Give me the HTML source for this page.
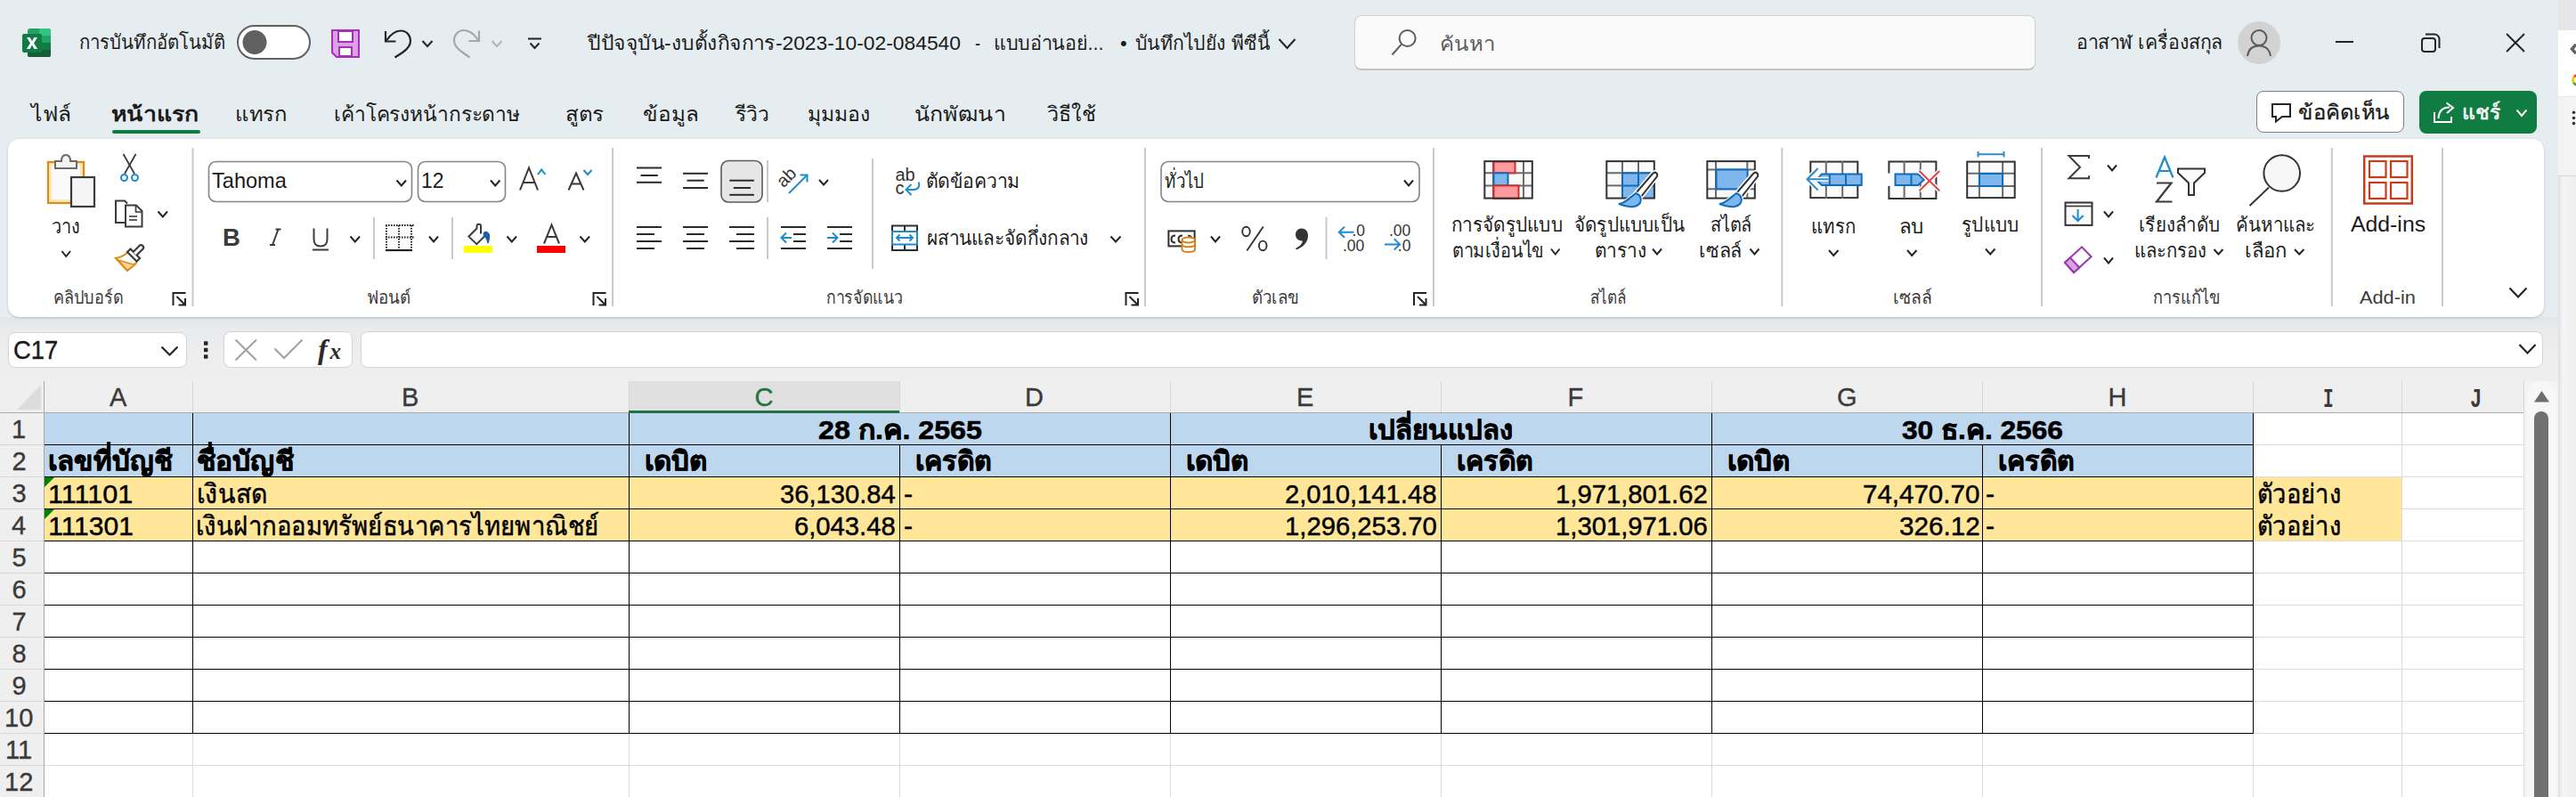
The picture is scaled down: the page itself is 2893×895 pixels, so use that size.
<!DOCTYPE html>
<html><head><meta charset="utf-8"><title>Excel</title><style>
html,body{margin:0;padding:0}
body{width:2893px;height:895px;overflow:hidden;position:relative;background:#e6edf0;font-family:"Liberation Sans",sans-serif}
.t{position:absolute;white-space:pre;transform-origin:0 0}
.ov{position:absolute;left:0;top:0}
.b{position:absolute;box-sizing:border-box}
</style></head><body>
<div class="b" style="left:0;top:356px;width:2873px;height:72px;background:linear-gradient(#e2e6e8,#e9ebec 14px,#eeeeee 50px)"></div>
<div class="b" style="left:9px;top:156px;width:2848px;height:200px;background:#fff;border-radius:13px;box-shadow:0 1px 3px rgba(0,0,0,0.18)"></div>
<div class="b" style="left:9px;top:373px;width:201px;height:40px;background:#fff;border:1px solid #d4d4d4;border-radius:8px"></div>
<div class="b" style="left:251px;top:372px;width:145px;height:41px;background:#fff;border:1px solid #d4d4d4;border-radius:8px"></div>
<div class="b" style="left:405px;top:372px;width:2451px;height:41px;background:#fff;border:1px solid #d4d4d4;border-radius:8px"></div>
<div class="b" style="left:1521px;top:17px;width:765px;height:62px;background:#fafafa;border:1px solid #d0d0d0;border-bottom:2px solid #c4c4c4;border-radius:8px"></div>
<div class="b" style="left:2513px;top:24px;width:48px;height:48px;background:#d2d2d2;border-radius:50%"></div>
<div class="b" style="left:2534px;top:102px;width:166px;height:47px;background:#fff;border:1.6px solid #7f7f7f;border-radius:8px"></div>
<div class="b" style="left:2717px;top:102px;width:132px;height:48px;background:#107c41;border-radius:8px"></div>
<div class="b" style="left:2834px;top:428px;width:39px;height:467px;background:#f3f3f3"></div>
<div class="b" style="left:2838px;top:428px;width:33px;height:480px;background:#f7f7f7;border-radius:16px"></div>
<div class="b" style="left:2846px;top:462px;width:16px;height:460px;background:#707070;border-radius:8px"></div>
<div class="b" style="left:2873px;top:0;width:20px;height:895px;background:linear-gradient(to right,#dedede,#f4f4f4 5px,#eeeeee)"></div>
<div class="b" style="left:2873px;top:0;width:20px;height:34px;background:#e6e6e8"></div>
<div class="b" style="left:2873px;top:34px;width:20px;height:74px;background:#ffffff"></div>
<div class="b" style="left:2873px;top:108px;width:20px;height:90px;background:#f3f3f3;border-top:1px solid #e6e6e6;border-bottom:1px solid #d6d6d6"></div>
<svg class="ov" width="2893" height="895" viewBox="0 0 2893 895" shape-rendering="crispEdges">
<rect x="0" y="428" width="2834" height="35" fill="#efefef"/>
<rect x="706" y="428" width="304" height="35" fill="#e0e0e0"/>
<rect x="0" y="463" width="49" height="432" fill="#efefef"/>
<rect x="49" y="463" width="2785" height="432" fill="#ffffff"/>
<rect x="216" y="463" width="1" height="432" fill="#dcdcdc"/>
<rect x="706" y="463" width="1" height="432" fill="#dcdcdc"/>
<rect x="1010" y="463" width="1" height="432" fill="#dcdcdc"/>
<rect x="1314" y="463" width="1" height="432" fill="#dcdcdc"/>
<rect x="1618" y="463" width="1" height="432" fill="#dcdcdc"/>
<rect x="1922" y="463" width="1" height="432" fill="#dcdcdc"/>
<rect x="2226" y="463" width="1" height="432" fill="#dcdcdc"/>
<rect x="2530" y="463" width="1" height="432" fill="#dcdcdc"/>
<rect x="2697" y="463" width="1" height="432" fill="#dcdcdc"/>
<rect x="2834" y="463" width="1" height="432" fill="#dcdcdc"/>
<rect x="49" y="499" width="2785" height="1" fill="#dcdcdc"/>
<rect x="49" y="535" width="2785" height="1" fill="#dcdcdc"/>
<rect x="49" y="571" width="2785" height="1" fill="#dcdcdc"/>
<rect x="49" y="607" width="2785" height="1" fill="#dcdcdc"/>
<rect x="49" y="643" width="2785" height="1" fill="#dcdcdc"/>
<rect x="49" y="679" width="2785" height="1" fill="#dcdcdc"/>
<rect x="49" y="715" width="2785" height="1" fill="#dcdcdc"/>
<rect x="49" y="751" width="2785" height="1" fill="#dcdcdc"/>
<rect x="49" y="787" width="2785" height="1" fill="#dcdcdc"/>
<rect x="49" y="823" width="2785" height="1" fill="#dcdcdc"/>
<rect x="49" y="859" width="2785" height="1" fill="#dcdcdc"/>
<rect x="49" y="895" width="2785" height="1" fill="#dcdcdc"/>
<rect x="50" y="463" width="2480" height="72" fill="#bdd7ee"/>
<rect x="50" y="536" width="2647" height="71" fill="#ffe699"/>
<rect x="49" y="499" width="2482" height="1" fill="#000"/>
<rect x="49" y="535" width="2482" height="1" fill="#000"/>
<rect x="49" y="571" width="2482" height="1" fill="#000"/>
<rect x="49" y="607" width="2482" height="1" fill="#000"/>
<rect x="49" y="643" width="2482" height="1" fill="#000"/>
<rect x="49" y="679" width="2482" height="1" fill="#000"/>
<rect x="49" y="715" width="2482" height="1" fill="#000"/>
<rect x="49" y="751" width="2482" height="1" fill="#000"/>
<rect x="49" y="787" width="2482" height="1" fill="#000"/>
<rect x="49" y="823" width="2482" height="1" fill="#000"/>
<rect x="216" y="463" width="1" height="361" fill="#000"/>
<rect x="706" y="463" width="1" height="361" fill="#000"/>
<rect x="1010" y="499" width="1" height="325" fill="#000"/>
<rect x="1314" y="463" width="1" height="361" fill="#000"/>
<rect x="1618" y="499" width="1" height="325" fill="#000"/>
<rect x="1922" y="463" width="1" height="361" fill="#000"/>
<rect x="2226" y="499" width="1" height="325" fill="#000"/>
<rect x="2530" y="463" width="1" height="361" fill="#000"/>
<rect x="216" y="428" width="1" height="35" fill="#d6d6d6"/>
<rect x="706" y="428" width="1" height="35" fill="#d6d6d6"/>
<rect x="1010" y="428" width="1" height="35" fill="#d6d6d6"/>
<rect x="1314" y="428" width="1" height="35" fill="#d6d6d6"/>
<rect x="1618" y="428" width="1" height="35" fill="#d6d6d6"/>
<rect x="1922" y="428" width="1" height="35" fill="#d6d6d6"/>
<rect x="2226" y="428" width="1" height="35" fill="#d6d6d6"/>
<rect x="2530" y="428" width="1" height="35" fill="#d6d6d6"/>
<rect x="2697" y="428" width="1" height="35" fill="#d6d6d6"/>
<rect x="2834" y="428" width="1" height="35" fill="#d6d6d6"/>
<rect x="0" y="463" width="2834" height="1" fill="#ababab"/>
<rect x="706" y="461" width="304" height="3" fill="#217346"/>
<rect x="49" y="428" width="1" height="467" fill="#a8a8a8"/>
<rect x="0" y="499" width="49" height="1" fill="#d9d9d9"/>
<rect x="0" y="535" width="49" height="1" fill="#d9d9d9"/>
<rect x="0" y="571" width="49" height="1" fill="#d9d9d9"/>
<rect x="0" y="607" width="49" height="1" fill="#d9d9d9"/>
<rect x="0" y="643" width="49" height="1" fill="#d9d9d9"/>
<rect x="0" y="679" width="49" height="1" fill="#d9d9d9"/>
<rect x="0" y="715" width="49" height="1" fill="#d9d9d9"/>
<rect x="0" y="751" width="49" height="1" fill="#d9d9d9"/>
<rect x="0" y="787" width="49" height="1" fill="#d9d9d9"/>
<rect x="0" y="823" width="49" height="1" fill="#d9d9d9"/>
<rect x="0" y="859" width="49" height="1" fill="#d9d9d9"/>
<rect x="0" y="895" width="49" height="1" fill="#d9d9d9"/>
<path d="M19 460 L46 460 L46 432 Z" fill="#dcdcdc" shape-rendering="geometricPrecision"/>
<path d="M50 536 L61 536 L50 547 Z" fill="#008000" shape-rendering="geometricPrecision"/>
<path d="M50 572 L61 572 L50 583 Z" fill="#008000" shape-rendering="geometricPrecision"/>
</svg>
<div class="t" style="left:89.07px;top:37.30px;font-size:22px;line-height:22px;color:#1b1b1b;transform:scaleX(0.9280);">การบันทึกอัตโนมัติ</div>
<div class="t" style="left:660.00px;top:38.30px;font-size:22px;line-height:22px;color:#1b1b1b;transform:scaleX(1.0372);">ปีปัจจุบัน-งบตั้งกิจการ-2023-10-02-084540</div>
<div class="t" style="left:1095.17px;top:38.30px;font-size:22px;line-height:22px;color:#1b1b1b;transform:scaleX(0.8333);">-</div>
<div class="t" style="left:1115.55px;top:38.30px;font-size:22px;line-height:22px;color:#1b1b1b;transform:scaleX(0.9764);">แบบอ่านอย่...</div>
<div class="t" style="left:1258.00px;top:38.30px;font-size:22px;line-height:22px;color:#1b1b1b;">•</div>
<div class="t" style="left:1275.04px;top:38.30px;font-size:22px;line-height:22px;color:#1b1b1b;transform:scaleX(0.9615);">บันทึกไปยัง พีซีนี้</div>
<div class="t" style="left:1617.02px;top:39.30px;font-size:22px;line-height:22px;color:#5c5c5c;transform:scaleX(1.0906);">ค้นหา</div>
<div class="t" style="left:2331.66px;top:37.00px;font-size:22px;line-height:22px;color:#1b1b1b;transform:scaleX(0.9699);">อาสาฬ เครื่องสกุล</div>
<div class="t" style="left:34.77px;top:117.25px;font-size:23px;line-height:23px;color:#1b1b1b;transform:scaleX(1.0690);">ไฟล์</div>
<div class="t" style="left:124.64px;top:117.25px;font-size:23px;line-height:23px;color:#1b1b1b;font-weight:bold;transform:scaleX(1.1590);">หน้าแรก</div>
<div class="t" style="left:263.92px;top:117.25px;font-size:23px;line-height:23px;color:#1b1b1b;transform:scaleX(1.0385);">แทรก</div>
<div class="t" style="left:375.02px;top:117.25px;font-size:23px;line-height:23px;color:#1b1b1b;transform:scaleX(0.9904);">เค้าโครงหน้ากระดาษ</div>
<div class="t" style="left:634.95px;top:117.25px;font-size:23px;line-height:23px;color:#1b1b1b;transform:scaleX(1.0500);">สูตร</div>
<div class="t" style="left:721.74px;top:117.25px;font-size:23px;line-height:23px;color:#1b1b1b;transform:scaleX(1.0571);">ข้อมูล</div>
<div class="t" style="left:826.30px;top:117.25px;font-size:23px;line-height:23px;color:#1b1b1b;transform:scaleX(0.9917);">รีวิว</div>
<div class="t" style="left:907.00px;top:117.25px;font-size:23px;line-height:23px;color:#1b1b1b;">มุมมอง</div>
<div class="t" style="left:1026.92px;top:117.25px;font-size:23px;line-height:23px;color:#1b1b1b;transform:scaleX(1.0815);">นักพัฒนา</div>
<div class="t" style="left:1175.59px;top:117.25px;font-size:23px;line-height:23px;color:#1b1b1b;transform:scaleX(1.0135);">วิธีใช้</div>
<div class="t" style="left:2580.96px;top:114.85px;font-size:23px;line-height:23px;color:#1b1b1b;-webkit-text-stroke:0.3px #1b1b1b;transform:scaleX(1.0392);">ข้อคิดเห็น</div>
<div class="t" style="left:2764.59px;top:114.95px;font-size:23px;line-height:23px;color:#ffffff;-webkit-text-stroke:0.5px #ffffff;transform:scaleX(1.0073);">แชร์</div>
<div class="t" style="left:238.40px;top:191.40px;font-size:24px;line-height:24px;color:#1b1b1b;transform:scaleX(0.9814);">Tahoma</div>
<div class="t" style="left:473.39px;top:191.40px;font-size:24px;line-height:24px;color:#1b1b1b;transform:scaleX(0.9542);">12</div>
<div class="t" style="left:1308.15px;top:192.70px;font-size:22px;line-height:22px;color:#1b1b1b;transform:scaleX(0.8500);">ทั่วไป</div>
<div class="t" style="left:1040.08px;top:193.30px;font-size:22px;line-height:22px;color:#1b1b1b;transform:scaleX(0.9623);">ตัดข้อความ</div>
<div class="t" style="left:1041.05px;top:257.30px;font-size:22px;line-height:22px;color:#1b1b1b;transform:scaleX(0.9471);">ผสานและจัดกึ่งกลาง</div>
<div class="t" style="left:58.09px;top:244.30px;font-size:22px;line-height:22px;color:#1b1b1b;transform:scaleX(0.9062);">วาง</div>
<div class="t" style="left:1630.45px;top:241.70px;font-size:22px;line-height:22px;color:#1b1b1b;transform:scaleX(0.9454);">การจัดรูปแบบ</div>
<div class="t" style="left:1630.79px;top:270.50px;font-size:22px;line-height:22px;color:#1b1b1b;transform:scaleX(0.9036);">ตามเงื่อนไข</div>
<div class="t" style="left:1768.46px;top:241.70px;font-size:22px;line-height:22px;color:#1b1b1b;transform:scaleX(0.9382);">จัดรูปแบบเป็น</div>
<div class="t" style="left:1790.79px;top:270.50px;font-size:22px;line-height:22px;color:#1b1b1b;transform:scaleX(0.9526);">ตาราง</div>
<div class="t" style="left:1921.09px;top:241.70px;font-size:22px;line-height:22px;color:#1b1b1b;transform:scaleX(0.9061);">สไตล์</div>
<div class="t" style="left:1908.04px;top:270.50px;font-size:22px;line-height:22px;color:#1b1b1b;transform:scaleX(0.9783);">เซลล์</div>
<div class="t" style="left:2034.15px;top:243.70px;font-size:22px;line-height:22px;color:#1b1b1b;transform:scaleX(0.9275);">แทรก</div>
<div class="t" style="left:2132.97px;top:243.70px;font-size:22px;line-height:22px;color:#1b1b1b;transform:scaleX(1.0167);">ลบ</div>
<div class="t" style="left:2202.86px;top:241.70px;font-size:22px;line-height:22px;color:#1b1b1b;transform:scaleX(0.9424);">รูปแบบ</div>
<div class="t" style="left:2402.13px;top:241.70px;font-size:22px;line-height:22px;color:#1b1b1b;transform:scaleX(0.9362);">เรียงลำดับ</div>
<div class="t" style="left:2396.55px;top:270.50px;font-size:22px;line-height:22px;color:#1b1b1b;transform:scaleX(0.9238);">และกรอง</div>
<div class="t" style="left:2511.44px;top:241.70px;font-size:22px;line-height:22px;color:#1b1b1b;transform:scaleX(0.9315);">ค้นหาและ</div>
<div class="t" style="left:2520.79px;top:270.50px;font-size:22px;line-height:22px;color:#1b1b1b;transform:scaleX(1.0045);">เลือก</div>
<div class="t" style="left:2640.00px;top:240.85px;font-size:23px;line-height:23px;color:#1b1b1b;transform:scaleX(1.0779);">Add-ins</div>
<div class="t" style="left:60.19px;top:324.00px;font-size:20px;line-height:20px;color:#3b3b3b;transform:scaleX(0.9048);">คลิปบอร์ด</div>
<div class="t" style="left:411.66px;top:324.00px;font-size:20px;line-height:20px;color:#3b3b3b;transform:scaleX(0.9373);">ฟอนต์</div>
<div class="t" style="left:927.61px;top:324.00px;font-size:20px;line-height:20px;color:#3b3b3b;transform:scaleX(0.8863);">การจัดแนว</div>
<div class="t" style="left:1405.77px;top:324.00px;font-size:20px;line-height:20px;color:#3b3b3b;transform:scaleX(0.9315);">ตัวเลข</div>
<div class="t" style="left:1785.54px;top:324.00px;font-size:20px;line-height:20px;color:#3b3b3b;transform:scaleX(0.8578);">สไตล์</div>
<div class="t" style="left:2125.56px;top:324.00px;font-size:20px;line-height:20px;color:#3b3b3b;transform:scaleX(0.9690);">เซลล์</div>
<div class="t" style="left:2418.29px;top:324.00px;font-size:20px;line-height:20px;color:#3b3b3b;transform:scaleX(0.9100);">การแก้ไข</div>
<div class="t" style="left:2650.00px;top:324.00px;font-size:20px;line-height:20px;color:#3b3b3b;transform:scaleX(1.0877);">Add-in</div>
<div class="t" style="left:15.06px;top:378.85px;font-size:29px;line-height:29px;color:#1b1b1b;-webkit-text-stroke:0.4px #1b1b1b;transform:scaleX(0.9412);">C17</div>
<div class="t" style="left:123.00px;top:432.35px;font-size:29px;line-height:29px;color:#3a3a3a;-webkit-text-stroke:0.35px #3a3a3a;">A</div>
<div class="t" style="left:451.00px;top:432.35px;font-size:29px;line-height:29px;color:#3a3a3a;-webkit-text-stroke:0.35px #3a3a3a;">B</div>
<div class="t" style="left:847.50px;top:432.35px;font-size:29px;line-height:29px;color:#217346;-webkit-text-stroke:0.35px #217346;">C</div>
<div class="t" style="left:1151.00px;top:432.35px;font-size:29px;line-height:29px;color:#3a3a3a;-webkit-text-stroke:0.35px #3a3a3a;">D</div>
<div class="t" style="left:1456.00px;top:432.35px;font-size:29px;line-height:29px;color:#3a3a3a;-webkit-text-stroke:0.35px #3a3a3a;">E</div>
<div class="t" style="left:1760.50px;top:432.35px;font-size:29px;line-height:29px;color:#3a3a3a;-webkit-text-stroke:0.35px #3a3a3a;">F</div>
<div class="t" style="left:2063.00px;top:432.35px;font-size:29px;line-height:29px;color:#3a3a3a;-webkit-text-stroke:0.35px #3a3a3a;">G</div>
<div class="t" style="left:2367.50px;top:432.35px;font-size:29px;line-height:29px;color:#3a3a3a;-webkit-text-stroke:0.35px #3a3a3a;">H</div>
<div class="t" style="left:2608.96px;top:434.03px;font-size:29px;line-height:29px;color:#3a3a3a;font-family:'Liberation Mono';font-weight:bold;transform:scale(0.6692,1.0350)">I</div>
<div class="t" style="left:2774.24px;top:434.03px;font-size:29px;line-height:29px;color:#3a3a3a;font-family:'Liberation Mono';font-weight:bold;transform:scale(0.7571,1.0350)">J</div>
<div class="t" style="left:13.00px;top:468.35px;font-size:29px;line-height:29px;color:#3a3a3a;-webkit-text-stroke:0.35px #3a3a3a;">1</div>
<div class="t" style="left:13.50px;top:504.35px;font-size:29px;line-height:29px;color:#3a3a3a;-webkit-text-stroke:0.35px #3a3a3a;">2</div>
<div class="t" style="left:13.50px;top:540.35px;font-size:29px;line-height:29px;color:#3a3a3a;-webkit-text-stroke:0.35px #3a3a3a;">3</div>
<div class="t" style="left:13.00px;top:576.35px;font-size:29px;line-height:29px;color:#3a3a3a;-webkit-text-stroke:0.35px #3a3a3a;">4</div>
<div class="t" style="left:13.50px;top:612.35px;font-size:29px;line-height:29px;color:#3a3a3a;-webkit-text-stroke:0.35px #3a3a3a;">5</div>
<div class="t" style="left:13.50px;top:648.35px;font-size:29px;line-height:29px;color:#3a3a3a;-webkit-text-stroke:0.35px #3a3a3a;">6</div>
<div class="t" style="left:13.50px;top:684.35px;font-size:29px;line-height:29px;color:#3a3a3a;-webkit-text-stroke:0.35px #3a3a3a;">7</div>
<div class="t" style="left:13.50px;top:720.35px;font-size:29px;line-height:29px;color:#3a3a3a;-webkit-text-stroke:0.35px #3a3a3a;">8</div>
<div class="t" style="left:13.50px;top:756.35px;font-size:29px;line-height:29px;color:#3a3a3a;-webkit-text-stroke:0.35px #3a3a3a;">9</div>
<div class="t" style="left:5.00px;top:792.35px;font-size:29px;line-height:29px;color:#3a3a3a;-webkit-text-stroke:0.35px #3a3a3a;">10</div>
<div class="t" style="left:6.00px;top:828.35px;font-size:29px;line-height:29px;color:#3a3a3a;-webkit-text-stroke:0.35px #3a3a3a;">11</div>
<div class="t" style="left:5.00px;top:864.35px;font-size:29px;line-height:29px;color:#3a3a3a;-webkit-text-stroke:0.35px #3a3a3a;">12</div>
<div class="t" style="left:918.83px;top:467.50px;font-size:30px;line-height:30px;color:#000000;font-weight:bold;-webkit-text-stroke:0.6px #000;transform:scaleX(1.0724);">28 ก.ค. 2565</div>
<div class="t" style="left:1537.33px;top:467.50px;font-size:30px;line-height:30px;color:#000000;font-weight:bold;-webkit-text-stroke:0.6px #000;transform:scaleX(1.0333);">เปลี่ยนแปลง</div>
<div class="t" style="left:2135.94px;top:467.50px;font-size:30px;line-height:30px;color:#000000;font-weight:bold;-webkit-text-stroke:0.6px #000;transform:scaleX(1.0553);">30 ธ.ค. 2566</div>
<div class="t" style="left:54.12px;top:503.20px;font-size:30px;line-height:30px;color:#000000;font-weight:bold;-webkit-text-stroke:0.6px #000;transform:scaleX(1.0402);">เลขที่บัญชี</div>
<div class="t" style="left:220.94px;top:503.20px;font-size:30px;line-height:30px;color:#000000;font-weight:bold;-webkit-text-stroke:0.6px #000;transform:scaleX(1.0588);">ชื่อบัญชี</div>
<div class="t" style="left:724.31px;top:503.20px;font-size:30px;line-height:30px;color:#000000;font-weight:bold;-webkit-text-stroke:0.6px #000;transform:scaleX(1.0438);">เดบิต</div>
<div class="t" style="left:1332.31px;top:503.20px;font-size:30px;line-height:30px;color:#000000;font-weight:bold;-webkit-text-stroke:0.6px #000;transform:scaleX(1.0437);">เดบิต</div>
<div class="t" style="left:1940.31px;top:503.20px;font-size:30px;line-height:30px;color:#000000;font-weight:bold;-webkit-text-stroke:0.6px #000;transform:scaleX(1.0437);">เดบิต</div>
<div class="t" style="left:1028.48px;top:503.20px;font-size:30px;line-height:30px;color:#000000;font-weight:bold;-webkit-text-stroke:0.6px #000;transform:scaleX(1.0111);">เครดิต</div>
<div class="t" style="left:1636.48px;top:503.20px;font-size:30px;line-height:30px;color:#000000;font-weight:bold;-webkit-text-stroke:0.6px #000;transform:scaleX(1.0111);">เครดิต</div>
<div class="t" style="left:2244.48px;top:503.20px;font-size:30px;line-height:30px;color:#000000;font-weight:bold;-webkit-text-stroke:0.6px #000;transform:scaleX(1.0111);">เครดิต</div>
<div class="t" style="left:54.16px;top:539.50px;font-size:30px;line-height:30px;color:#000000;-webkit-text-stroke:0.45px #000;transform:scaleX(1.0200);">111101</div>
<div class="t" style="left:54.20px;top:575.50px;font-size:30px;line-height:30px;color:#000000;-webkit-text-stroke:0.45px #000;">111301</div>
<div class="t" style="left:220.50px;top:539.50px;font-size:30px;line-height:30px;color:#000000;-webkit-text-stroke:0.45px #000;transform:scaleX(0.9494);">เงินสด</div>
<div class="t" style="left:220.17px;top:575.50px;font-size:30px;line-height:30px;color:#000000;-webkit-text-stroke:0.45px #000;transform:scaleX(0.9165);">เงินฝากออมทรัพย์ธนาคารไทยพาณิชย์</div>
<div class="t" style="left:876.13px;top:539.50px;font-size:30px;line-height:30px;color:#000000;-webkit-text-stroke:0.45px #000;transform:scaleX(0.9720);">36,130.84</div>
<div class="t" style="left:892.43px;top:575.50px;font-size:30px;line-height:30px;color:#000000;-webkit-text-stroke:0.45px #000;transform:scaleX(0.9739);">6,043.48</div>
<div class="t" style="left:1443.33px;top:539.50px;font-size:30px;line-height:30px;color:#000000;-webkit-text-stroke:0.45px #000;transform:scaleX(0.9728);">2,010,141.48</div>
<div class="t" style="left:1443.05px;top:575.50px;font-size:30px;line-height:30px;color:#000000;-webkit-text-stroke:0.45px #000;transform:scaleX(0.9744);">1,296,253.70</div>
<div class="t" style="left:1747.45px;top:539.50px;font-size:30px;line-height:30px;color:#000000;-webkit-text-stroke:0.45px #000;transform:scaleX(0.9744);">1,971,801.62</div>
<div class="t" style="left:1747.45px;top:575.50px;font-size:30px;line-height:30px;color:#000000;-webkit-text-stroke:0.45px #000;transform:scaleX(0.9744);">1,301,971.06</div>
<div class="t" style="left:2092.02px;top:539.50px;font-size:30px;line-height:30px;color:#000000;-webkit-text-stroke:0.45px #000;transform:scaleX(0.9840);">74,470.70</div>
<div class="t" style="left:2133.01px;top:575.50px;font-size:30px;line-height:30px;color:#000000;-webkit-text-stroke:0.45px #000;transform:scaleX(0.9876);">326.12</div>
<div class="t" style="left:1014.79px;top:539.50px;font-size:30px;line-height:30px;color:#000000;-webkit-text-stroke:0.45px #000;transform:scaleX(1.0125);">-</div>
<div class="t" style="left:2230.49px;top:539.50px;font-size:30px;line-height:30px;color:#000000;-webkit-text-stroke:0.45px #000;transform:scaleX(1.0125);">-</div>
<div class="t" style="left:2534.68px;top:539.50px;font-size:30px;line-height:30px;color:#000000;-webkit-text-stroke:0.45px #000;transform:scaleX(0.9090);">ตัวอย่าง</div>
<div class="t" style="left:1014.79px;top:575.50px;font-size:30px;line-height:30px;color:#000000;-webkit-text-stroke:0.45px #000;transform:scaleX(1.0125);">-</div>
<div class="t" style="left:2230.49px;top:575.50px;font-size:30px;line-height:30px;color:#000000;-webkit-text-stroke:0.45px #000;transform:scaleX(1.0125);">-</div>
<div class="t" style="left:2534.68px;top:575.50px;font-size:30px;line-height:30px;color:#000000;-webkit-text-stroke:0.45px #000;transform:scaleX(0.9090);">ตัวอย่าง</div>
<svg class="ov" width="2893" height="895" viewBox="0 0 2893 895" fill="none">
<rect x="31.0" y="32.0" width="26.0" height="32.0" rx="2.5" fill="#21a366" stroke="none" stroke-width="0"/>
<path d="M44,32 H54.5 A2.5,2.5 0 0 1 57,34.5 V40 H44 Z" stroke="none" stroke-width="0" fill="#33c481" />
<rect x="31.0" y="48.0" width="26.0" height="8.0" rx="0" fill="#107c41" stroke="none" stroke-width="0"/>
<path d="M31,56 H57 V61.5 A2.5,2.5 0 0 1 54.5,64 H33.5 A2.5,2.5 0 0 1 31,61.5 Z" stroke="none" stroke-width="0" fill="#185c37" />
<rect x="25.0" y="38.0" width="22.0" height="21.0" rx="2" fill="#107c41" stroke="none" stroke-width="0"/>
<path d="M30,42 H33.8 L36,46.3 L38.3,42 H42 L38,48.5 L42.2,55 H38.4 L36,50.6 L33.6,55 H29.8 L34,48.5 Z" stroke="none" stroke-width="0" fill="#ffffff" />
<rect x="267.0" y="29.0" width="81.0" height="37.0" rx="18.5" fill="#ffffff" stroke="#606060" stroke-width="2"/>
<circle cx="286" cy="47.5" r="13.5" fill="#606060"/>
<path d="M373,34 H403 V64 H378 L373,59 Z" stroke="#a232b3" stroke-width="2" fill="#dda0e6" />
<rect x="380.0" y="35.0" width="16.0" height="12.0" rx="0" fill="#ffffff" stroke="#a232b3" stroke-width="2"/>
<rect x="381.0" y="53.0" width="14.0" height="10.0" rx="0" fill="#ffffff" stroke="#a232b3" stroke-width="2"/>
<path d="M433,35 V46.5 H444.5" stroke="#242424" stroke-width="2.2" fill="none" />
<path d="M434,45.5 C439,38 444,34.5 450,34.5 C457,34.5 461,40 461,46 C461,52 457,55.5 452,59 L443.5,64.5" stroke="#242424" stroke-width="2.2" fill="none" />
<polyline points="474.5,46.0 480.0,52.0 485.5,46.0" stroke="#242424" stroke-width="2" fill="none"/>
<path d="M538,34.5 V46 H526.5" stroke="#a6a6a6" stroke-width="2.2" fill="none" />
<path d="M537,45 C532,37.5 527,34 521,34 C514,34 510,39.5 510,45.5 C510,51.5 514,55 519,58.5 L527.5,64.5" stroke="#a6a6a6" stroke-width="2.2" fill="none" />
<polyline points="552.5,46.0 558.0,52.0 563.5,46.0" stroke="#b4b4b4" stroke-width="2" fill="none"/>
<line x1="593.0" y1="43.5" x2="608.0" y2="43.5" stroke="#242424" stroke-width="2"/>
<polyline points="595.5,48.5 600.5,54.0 605.5,48.5" stroke="#242424" stroke-width="2" fill="none"/>
<polyline points="1436.5,44.0 1445.5,54.0 1454.5,44.0" stroke="#242424" stroke-width="2" fill="none"/>
<circle cx="1580.6" cy="43" r="9" stroke="#5c5c5c" stroke-width="2"/>
<line x1="1574.0" y1="49.6" x2="1563.5" y2="61.5" stroke="#5c5c5c" stroke-width="2"/>
<circle cx="2537" cy="42.5" r="8.5" stroke="#5c5c5c" stroke-width="2"/>
<path d="M2524,63 C2525,55 2530,51.5 2537,51.5 C2544,51.5 2549,55 2550,63" stroke="#5c5c5c" stroke-width="2" fill="none" />
<line x1="2623.0" y1="47.0" x2="2643.0" y2="47.0" stroke="#242424" stroke-width="2"/>
<rect x="2720.0" y="43.0" width="15.0" height="15.0" rx="3" fill="none" stroke="#242424" stroke-width="2"/>
<path d="M2724,38.5 H2734 C2737,38.5 2739.5,41 2739.5,44 V54" stroke="#242424" stroke-width="2" fill="none" />
<line x1="2815.0" y1="38.0" x2="2835.0" y2="58.0" stroke="#242424" stroke-width="2"/>
<line x1="2835.0" y1="38.0" x2="2815.0" y2="58.0" stroke="#242424" stroke-width="2"/>
<rect x="126.0" y="146.0" width="99.0" height="4.0" rx="2" fill="#107c41" stroke="none" stroke-width="0"/>
<path d="M2552,117 H2572 V131 H2563 L2556,136.5 V131 H2552 Z" stroke="#242424" stroke-width="2" fill="none" />
<path d="M2734,126 V137 H2753 V131" stroke="#ffffff" stroke-width="2" fill="none" />
<path d="M2738.5,133 C2739,124 2744,120.5 2751,120.5" stroke="#ffffff" stroke-width="2" fill="none" />
<path d="M2747.5,115.5 L2755,121 L2748,127" stroke="#ffffff" stroke-width="2" fill="none" />
<polyline points="2826.5,123.5 2832.0,130.0 2837.5,123.5" stroke="#ffffff" stroke-width="2" fill="none"/>
<rect x="54.0" y="182.0" width="40.0" height="46.0" rx="0" fill="#fde6b3" stroke="#d98b1b" stroke-width="2.2"/>
<rect x="58.0" y="186.0" width="32.0" height="38.0" rx="0" fill="#fafafa" stroke="none" stroke-width="0"/>
<path d="M62,189 V181 H69 C69,176 71.5,174 74,174 C76.5,174 79,176 79,181 H86 V189 Z" stroke="#6b6b6b" stroke-width="2" fill="#f3f3f3" />
<rect x="80.0" y="199.0" width="26.0" height="33.0" rx="0" fill="#f5f5f5" stroke="#3b3b3b" stroke-width="2.2"/>
<line x1="138.5" y1="173.0" x2="151.0" y2="195.0" stroke="#3b3b3b" stroke-width="1.8"/>
<line x1="152.5" y1="173.0" x2="140.0" y2="195.0" stroke="#3b3b3b" stroke-width="1.8"/>
<circle cx="139.5" cy="199.5" r="3.5" stroke="#1e8bcd" stroke-width="2"/>
<circle cx="151.5" cy="199.5" r="3.5" stroke="#1e8bcd" stroke-width="2"/>
<path d="M144,250 H130 V225.5 H140 L143,228.5" stroke="#3b3b3b" stroke-width="2" fill="none" />
<path d="M141,230.5 H153 L159.5,237 V254.5 H141 Z" stroke="#3b3b3b" stroke-width="2" fill="#ffffff" />
<path d="M152.5,231 V238 H159" stroke="#3b3b3b" stroke-width="1.6" fill="none" />
<line x1="145.0" y1="243.0" x2="154.0" y2="243.0" stroke="#3b3b3b" stroke-width="1.6"/>
<line x1="145.0" y1="247.0" x2="154.0" y2="247.0" stroke="#3b3b3b" stroke-width="1.6"/>
<polyline points="177.5,237.5 182.8,243.5 188.0,237.5" stroke="#242424" stroke-width="2" fill="none"/>
<path d="M143.5,283.5 C138.5,287.5 134,289.3 130,290 L143,304 L153.5,294.5" stroke="#e08a14" stroke-width="2.2" fill="#ffffff" />
<path d="M132.5,292 L151.5,297.5 L143,303.5 Z" stroke="#e08a14" stroke-width="1.6" fill="#fcd595" />
<path d="M143,283 L146.5,279.5 L157,290 L153.5,293.5 Z" stroke="#3b3b3b" stroke-width="2.2" fill="#ffffff" />
<path d="M149.5,283 L156.5,276 C157.6,274.9 159.2,274.9 160.3,276 C161.4,277.1 161.4,278.7 160.3,279.8 L153,287" stroke="#3b3b3b" stroke-width="2.2" fill="#ffffff" />
<polyline points="69.5,282.0 74.2,288.0 79.0,282.0" stroke="#242424" stroke-width="2" fill="none"/>
<path d="M194.5,343.0 V329.0 H208.5" stroke="#242424" stroke-width="2" fill="none" /><path d="M198.5,333.0 L208.0,342.5 M200.5,342.5 H208.0 V335.0" stroke="#242424" stroke-width="2" fill="none" />
<rect x="215.5" y="166.0" width="2.0" height="178.0" rx="0" fill="#c9c9c9" stroke="none" stroke-width="0"/>
<rect x="234.5" y="181.5" width="228.0" height="45.0" rx="8" fill="none" stroke="#858585" stroke-width="1.6"/>
<polyline points="445.5,202.5 450.8,208.5 456.0,202.5" stroke="#242424" stroke-width="2" fill="none"/>
<rect x="469.5" y="181.5" width="98.0" height="45.0" rx="8" fill="none" stroke="#858585" stroke-width="1.6"/>
<polyline points="551.0,202.5 556.2,208.5 561.5,202.5" stroke="#242424" stroke-width="2" fill="none"/>
<path d="M584,213.5 L594,188.5 L604,213.5 M587.5,205 H600.5" stroke="#3b3b3b" stroke-width="2" fill="none" />
<polyline points="604.0,196.0 608.2,190.5 612.5,196.0" stroke="#1e8bcd" stroke-width="2" fill="none"/>
<path d="M638.5,213.5 L647,194.5 L655.5,213.5 M641.5,206.5 H652.5" stroke="#3b3b3b" stroke-width="2" fill="none" />
<polyline points="655.5,191.0 660.0,196.0 664.5,191.0" stroke="#1e8bcd" stroke-width="2" fill="none"/>
<text x="250" y="276" font-family="Liberation Sans" font-weight="bold" font-size="27.5" fill="#3a3a3a">B</text>
<path d="M309.5,257.5 H315.5 M303,275 H309 M312.5,257.5 L306,275" stroke="#3b3b3b" stroke-width="2" fill="none" />
<path d="M352.5,256.5 V268.5 C352.5,274 355.5,276.5 360,276.5 C364.5,276.5 367.5,274 367.5,268.5 V256.5" stroke="#3b3b3b" stroke-width="2" fill="none" />
<line x1="351.0" y1="280.5" x2="369.0" y2="280.5" stroke="#3b3b3b" stroke-width="2"/>
<polyline points="393.5,265.5 398.8,271.5 404.0,265.5" stroke="#242424" stroke-width="2" fill="none"/>
<rect x="419.0" y="244.0" width="2.0" height="47.0" rx="0" fill="#c9c9c9" stroke="none" stroke-width="0"/>
<path d="M433,253.0 h1.6 M436,253.0 h1.6 M439,253.0 h1.6 M442,253.0 h1.6 M445,253.0 h1.6 M448,253.0 h1.6 M451,253.0 h1.6 M454,253.0 h1.6 M457,253.0 h1.6 M460,253.0 h1.6 M463,253.0 h1.6 M433,266.5 h1.6 M436,266.5 h1.6 M439,266.5 h1.6 M442,266.5 h1.6 M445,266.5 h1.6 M448,266.5 h1.6 M451,266.5 h1.6 M454,266.5 h1.6 M457,266.5 h1.6 M460,266.5 h1.6 M463,266.5 h1.6 M434.0,253 v1.6 M434.0,256 v1.6 M434.0,259 v1.6 M434.0,262 v1.6 M434.0,265 v1.6 M434.0,268 v1.6 M434.0,271 v1.6 M434.0,274 v1.6 M434.0,277 v1.6 M434.0,280 v1.6 M448.0,253 v1.6 M448.0,256 v1.6 M448.0,259 v1.6 M448.0,262 v1.6 M448.0,265 v1.6 M448.0,268 v1.6 M448.0,271 v1.6 M448.0,274 v1.6 M448.0,277 v1.6 M448.0,280 v1.6 M462.0,253 v1.6 M462.0,256 v1.6 M462.0,259 v1.6 M462.0,262 v1.6 M462.0,265 v1.6 M462.0,268 v1.6 M462.0,271 v1.6 M462.0,274 v1.6 M462.0,277 v1.6 M462.0,280 v1.6" stroke="#222" stroke-width="2" fill="none" />
<line x1="433.0" y1="281.0" x2="463.0" y2="281.0" stroke="#222" stroke-width="2.2"/>
<polyline points="482.0,265.5 487.0,271.5 492.0,265.5" stroke="#242424" stroke-width="2" fill="none"/>
<rect x="507.0" y="244.0" width="2.0" height="47.0" rx="0" fill="#c9c9c9" stroke="none" stroke-width="0"/>
<path d="M540,262.5 V254 C540,251 535.5,251 535.5,254 V256.5 L526.5,265.6 L535.3,274.2 L545,264.5" stroke="#3b3b3b" stroke-width="2" fill="#ffffff" />
<path d="M543.5,261.5 C546,259.5 549.5,261 549.5,265.5 C549.5,268 548.5,271 548,273 C547.5,269 546,266.5 543.5,264.5 Z" stroke="#1a5fa8" stroke-width="1.5" fill="#1a5fa8" />
<rect x="521.0" y="276.0" width="32.0" height="8.0" rx="0" fill="#ffff00" stroke="none" stroke-width="0"/>
<polyline points="569.5,265.5 574.8,271.5 580.0,265.5" stroke="#242424" stroke-width="2" fill="none"/>
<path d="M611,273.5 L619.5,252.5 L628,273.5 M614,266 H625" stroke="#3b3b3b" stroke-width="2" fill="none" />
<rect x="603.0" y="276.0" width="32.0" height="8.0" rx="0" fill="#ff0000" stroke="none" stroke-width="0"/>
<polyline points="651.5,265.5 656.8,271.5 662.0,265.5" stroke="#242424" stroke-width="2" fill="none"/>
<path d="M666.5,343.0 V329.0 H680.5" stroke="#242424" stroke-width="2" fill="none" /><path d="M670.5,333.0 L680.0,342.5 M672.5,342.5 H680.0 V335.0" stroke="#242424" stroke-width="2" fill="none" />
<rect x="687.0" y="166.0" width="2.0" height="178.0" rx="0" fill="#c9c9c9" stroke="none" stroke-width="0"/>
<line x1="715.0" y1="188.5" x2="743.0" y2="188.5" stroke="#2a2a2a" stroke-width="2"/><line x1="719.5" y1="197.0" x2="738.8" y2="197.0" stroke="#2a2a2a" stroke-width="2"/><line x1="715.0" y1="204.8" x2="743.0" y2="204.8" stroke="#2a2a2a" stroke-width="2"/>
<line x1="767.0" y1="194.8" x2="795.0" y2="194.8" stroke="#2a2a2a" stroke-width="2"/><line x1="771.5" y1="202.7" x2="790.8" y2="202.7" stroke="#2a2a2a" stroke-width="2"/><line x1="767.0" y1="211.0" x2="795.0" y2="211.0" stroke="#2a2a2a" stroke-width="2"/>
<rect x="810.0" y="180.5" width="46.0" height="46.5" rx="8" fill="#e6e6e6" stroke="#5a5a5a" stroke-width="1.6"/>
<line x1="819.3" y1="202.7" x2="846.9" y2="202.7" stroke="#2a2a2a" stroke-width="2"/><line x1="823.8" y1="211.0" x2="843.0" y2="211.0" stroke="#2a2a2a" stroke-width="2"/><line x1="819.3" y1="218.8" x2="846.9" y2="218.8" stroke="#2a2a2a" stroke-width="2"/>
<rect x="861.0" y="180.0" width="2.0" height="47.0" rx="0" fill="#c9c9c9" stroke="none" stroke-width="0"/>
<text x="0" y="0" font-family="Liberation Sans" font-size="20" fill="#333" transform="translate(880,211.5) rotate(-45)">ab</text>
<line x1="886.0" y1="217.0" x2="906.5" y2="196.5" stroke="#1e8bcd" stroke-width="2"/>
<path d="M898.5,196.5 H906.5 V204.5" stroke="#1e8bcd" stroke-width="2" fill="none" />
<polyline points="920.0,202.0 925.0,207.5 930.0,202.0" stroke="#242424" stroke-width="2" fill="none"/>
<line x1="715.0" y1="255.0" x2="743.0" y2="255.0" stroke="#2a2a2a" stroke-width="2"/><line x1="715.0" y1="263.0" x2="735.0" y2="263.0" stroke="#2a2a2a" stroke-width="2"/><line x1="715.0" y1="271.0" x2="743.0" y2="271.0" stroke="#2a2a2a" stroke-width="2"/><line x1="715.0" y1="279.0" x2="735.0" y2="279.0" stroke="#2a2a2a" stroke-width="2"/>
<line x1="767.0" y1="255.0" x2="795.0" y2="255.0" stroke="#2a2a2a" stroke-width="2"/><line x1="771.0" y1="263.0" x2="791.0" y2="263.0" stroke="#2a2a2a" stroke-width="2"/><line x1="767.0" y1="271.0" x2="795.0" y2="271.0" stroke="#2a2a2a" stroke-width="2"/><line x1="771.0" y1="279.0" x2="791.0" y2="279.0" stroke="#2a2a2a" stroke-width="2"/>
<line x1="819.0" y1="255.0" x2="847.0" y2="255.0" stroke="#2a2a2a" stroke-width="2"/><line x1="827.0" y1="263.0" x2="847.0" y2="263.0" stroke="#2a2a2a" stroke-width="2"/><line x1="819.0" y1="271.0" x2="847.0" y2="271.0" stroke="#2a2a2a" stroke-width="2"/><line x1="827.0" y1="279.0" x2="847.0" y2="279.0" stroke="#2a2a2a" stroke-width="2"/>
<rect x="861.0" y="244.0" width="2.0" height="47.0" rx="0" fill="#c9c9c9" stroke="none" stroke-width="0"/>
<line x1="877.0" y1="255.0" x2="905.0" y2="255.0" stroke="#2a2a2a" stroke-width="2"/><line x1="877.0" y1="279.0" x2="905.0" y2="279.0" stroke="#2a2a2a" stroke-width="2"/>
<line x1="891.0" y1="263.0" x2="905.0" y2="263.0" stroke="#2a2a2a" stroke-width="2"/><line x1="891.0" y1="271.0" x2="905.0" y2="271.0" stroke="#2a2a2a" stroke-width="2"/>
<line x1="877.5" y1="267.0" x2="889.0" y2="267.0" stroke="#1e8bcd" stroke-width="2"/><path d="M883,261.5 L877.5,267 L883,272.5" stroke="#1e8bcd" stroke-width="2" fill="none" />
<line x1="929.0" y1="255.0" x2="957.0" y2="255.0" stroke="#2a2a2a" stroke-width="2"/><line x1="929.0" y1="279.0" x2="957.0" y2="279.0" stroke="#2a2a2a" stroke-width="2"/>
<line x1="943.0" y1="263.0" x2="957.0" y2="263.0" stroke="#2a2a2a" stroke-width="2"/><line x1="943.0" y1="271.0" x2="957.0" y2="271.0" stroke="#2a2a2a" stroke-width="2"/>
<line x1="929.0" y1="267.0" x2="940.5" y2="267.0" stroke="#1e8bcd" stroke-width="2"/><path d="M935,261.5 L940.5,267 L935,272.5" stroke="#1e8bcd" stroke-width="2" fill="none" />
<rect x="979.0" y="178.0" width="2.0" height="124.0" rx="0" fill="#c9c9c9" stroke="none" stroke-width="0"/>
<text x="1005.5" y="203" font-family="Liberation Sans" font-size="20" fill="#333">ab</text>
<text x="1005.5" y="217.5" font-family="Liberation Sans" font-size="20" fill="#333">c</text>
<path d="M1031.5,204.5 C1033.5,208 1032,213 1026,213 H1018" stroke="#1e8bcd" stroke-width="2" fill="none" />
<path d="M1023.5,207 L1017.5,213 L1023.5,219" stroke="#1e8bcd" stroke-width="2" fill="none" />
<rect x="1002.0" y="253.5" width="28.0" height="27.5" rx="0" fill="none" stroke="#2e2e2e" stroke-width="2"/>
<line x1="1016.0" y1="253.5" x2="1016.0" y2="261.0" stroke="#2e2e2e" stroke-width="2"/><line x1="1016.0" y1="274.0" x2="1016.0" y2="281.0" stroke="#2e2e2e" stroke-width="2"/>
<rect x="1002.0" y="260.0" width="28.0" height="14.5" rx="0" fill="#ffffff" stroke="#1e8bcd" stroke-width="2"/>
<path d="M1007,267 H1025 M1010.5,263.5 L1007,267 L1010.5,270.5 M1021.5,263.5 L1025,267 L1021.5,270.5" stroke="#1e8bcd" stroke-width="2" fill="none" />
<polyline points="1247.5,265.5 1253.0,271.5 1258.5,265.5" stroke="#242424" stroke-width="2" fill="none"/>
<path d="M1264.5,343.0 V329.0 H1278.5" stroke="#242424" stroke-width="2" fill="none" /><path d="M1268.5,333.0 L1278.0,342.5 M1270.5,342.5 H1278.0 V335.0" stroke="#242424" stroke-width="2" fill="none" />
<rect x="1285.0" y="166.0" width="2.0" height="178.0" rx="0" fill="#c9c9c9" stroke="none" stroke-width="0"/>
<rect x="1304.0" y="181.5" width="290.0" height="45.0" rx="8" fill="none" stroke="#858585" stroke-width="1.6"/>
<polyline points="1577.0,202.5 1582.0,208.5 1587.0,202.5" stroke="#242424" stroke-width="2" fill="none"/>
<rect x="1312.4" y="259.4" width="29.2" height="17.0" rx="0" fill="none" stroke="#2e2e2e" stroke-width="2"/>
<path d="M1320,264.5 C1316.5,264.5 1315.5,266.5 1315.5,268.5 C1315.5,270.5 1316.5,272.5 1320,272.5" stroke="#2e2e2e" stroke-width="2" fill="none" />
<path d="M1328,264.5 C1324.5,264.5 1323.5,266.5 1323.5,268.5 C1323.5,270.5 1324.5,272.5 1328,272.5" stroke="#2e2e2e" stroke-width="2" fill="none" />
<path d="M1334,264.5 C1336.5,264.5 1337.5,265.5 1338,266.5" stroke="#2e2e2e" stroke-width="2" fill="none" />
<path d="M1327.5,269 V280 C1327.5,284 1342,284 1342,280 V269" stroke="#d9821b" stroke-width="2" fill="#ffffff" />
<path d="M1327.5,274.5 C1327.5,278 1342,278 1342,274.5" stroke="#d9821b" stroke-width="2" fill="none" />
<ellipse cx="1334.75" cy="269.5" rx="7.25" ry="3" stroke="#d9821b" stroke-width="2" fill="#ffffff"/>
<polyline points="1360.0,265.5 1365.0,271.5 1370.0,265.5" stroke="#242424" stroke-width="2" fill="none"/>
<ellipse cx="1399.5" cy="260" rx="4.3" ry="5.3" stroke="#333" stroke-width="1.9"/>
<ellipse cx="1418.2" cy="275.9" rx="4.3" ry="5.3" stroke="#333" stroke-width="1.9"/>
<line x1="1418.8" y1="254.5" x2="1400.3" y2="281.5" stroke="#333" stroke-width="1.9"/>
<path d="M1461.5,256.5 C1466,256.5 1469,259.5 1469,264.5 C1469,271.5 1464.5,277 1456,280.5 L1455,279 C1460,276.5 1462.5,273.5 1463,270.5 C1458.5,270.5 1455,268 1455,263.5 C1455,259.5 1458,256.5 1461.5,256.5 Z" stroke="none" stroke-width="0" fill="#333" />
<rect x="1488.5" y="244.0" width="2.0" height="47.0" rx="0" fill="#c9c9c9" stroke="none" stroke-width="0"/>
<text x="1518.5" y="265.0" font-family="Liberation Sans" font-size="17.5" fill="#333">.0</text>
<text x="1508.0" y="281.6" font-family="Liberation Sans" font-size="17.5" fill="#333">.00</text>
<path d="M1503.8,260.7 H1520.5 M1510,254.6 L1503.8,260.7 L1510,266.8" stroke="#1e8bcd" stroke-width="2" fill="none" />
<text x="1560.0" y="265.0" font-family="Liberation Sans" font-size="17.5" fill="#333">.00</text>
<text x="1569.8" y="281.6" font-family="Liberation Sans" font-size="17.5" fill="#333">.0</text>
<path d="M1555,274.4 H1572 M1565.8,268.3 L1572,274.4 L1565.8,280.5" stroke="#1e8bcd" stroke-width="2" fill="none" />
<path d="M1588.0,343.0 V329.0 H1602.0" stroke="#242424" stroke-width="2" fill="none" /><path d="M1592.0,333.0 L1601.5,342.5 M1594.0,342.5 H1601.5 V335.0" stroke="#242424" stroke-width="2" fill="none" />
<rect x="1609.0" y="166.0" width="2.0" height="178.0" rx="0" fill="#c9c9c9" stroke="none" stroke-width="0"/>
</svg>
<svg class="ov" width="2893" height="895" viewBox="0 0 2893 895" fill="none">
<rect x="1667.3" y="181.1" width="53.5" height="41.5" rx="0" fill="#fafafa" stroke="none" stroke-width="0"/>
<line x1="1667.0" y1="194.3" x2="1721.0" y2="194.3" stroke="#6b6b6b" stroke-width="2"/><line x1="1667.0" y1="208.4" x2="1721.0" y2="208.4" stroke="#6b6b6b" stroke-width="2"/>
<line x1="1711.0" y1="181.0" x2="1711.0" y2="223.0" stroke="#6b6b6b" stroke-width="2"/><line x1="1677.0" y1="181.0" x2="1677.0" y2="223.0" stroke="#6b6b6b" stroke-width="2"/>
<rect x="1677.5" y="181.5" width="24.0" height="12.8" rx="0" fill="#ff9b9f" stroke="#d42a2a" stroke-width="2"/>
<rect x="1677.5" y="194.3" width="16.0" height="14.1" rx="0" fill="#7fb6ec" stroke="#0f6cbd" stroke-width="2"/>
<rect x="1677.5" y="208.4" width="28.0" height="14.6" rx="0" fill="#ff9b9f" stroke="#d42a2a" stroke-width="2"/>
<rect x="1667.3" y="181.1" width="53.5" height="41.5" rx="0" fill="none" stroke="#333333" stroke-width="2"/>
<rect x="1804.3" y="181.1" width="53.5" height="41.5" rx="0" fill="#fafafa" stroke="none" stroke-width="0"/>
<rect x="1822.0" y="194.3" width="36.0" height="28.5" rx="0" fill="#7fb6ec" stroke="none" stroke-width="0"/>
<line x1="1804.0" y1="194.3" x2="1858.0" y2="194.3" stroke="#6b6b6b" stroke-width="2"/><line x1="1804.0" y1="208.4" x2="1822.0" y2="208.4" stroke="#6b6b6b" stroke-width="2"/>
<line x1="1822.0" y1="181.0" x2="1822.0" y2="194.0" stroke="#6b6b6b" stroke-width="2"/><line x1="1840.0" y1="181.0" x2="1840.0" y2="194.0" stroke="#6b6b6b" stroke-width="2"/>
<path d="M1822,223 V194.3 H1858 V223 M1822,208.4 H1858 M1840,194.3 V223" stroke="#0f6cbd" stroke-width="2" fill="none" />
<rect x="1804.3" y="181.1" width="53.5" height="41.5" rx="0" fill="none" stroke="#333333" stroke-width="2"/>
<path d="M1856.0,195.0 C1859.0,192.0 1862.0,194.5 1861.0,198.0 L1842.5,221.5 L1837.5,216.5 Z" stroke="#ffffff" stroke-width="5" fill="#ffffff" /><path d="M1856.0,195.0 C1859.0,192.0 1862.0,194.5 1861.0,198.0 L1842.5,221.5 L1837.5,216.5 Z" stroke="#333" stroke-width="2" fill="#ffffff" /><path d="M1837.0,217.0 C1845.0,220.0 1845.0,230.0 1835.0,232.0 C1829.0,233.0 1824.0,231.0 1818.0,229.0 C1824.0,228.0 1827.0,225.0 1837.0,217.0 Z" stroke="#ffffff" stroke-width="4" fill="#7fb6ec" /><path d="M1837.0,217.0 C1845.0,220.0 1845.0,230.0 1835.0,232.0 C1829.0,233.0 1824.0,231.0 1818.0,229.0 C1824.0,228.0 1827.0,225.0 1837.0,217.0 Z" stroke="#0f6cbd" stroke-width="2" fill="#7fb6ec" />
<rect x="1917.3" y="181.1" width="53.5" height="41.5" rx="0" fill="#fafafa" stroke="none" stroke-width="0"/>
<line x1="1917.0" y1="190.5" x2="1971.0" y2="190.5" stroke="#6b6b6b" stroke-width="2"/><line x1="1917.0" y1="212.3" x2="1971.0" y2="212.3" stroke="#6b6b6b" stroke-width="2"/>
<line x1="1927.0" y1="181.0" x2="1927.0" y2="223.0" stroke="#6b6b6b" stroke-width="2"/><line x1="1962.3" y1="181.0" x2="1962.3" y2="223.0" stroke="#6b6b6b" stroke-width="2"/>
<rect x="1927.5" y="190.5" width="35.0" height="21.8" rx="0" fill="#7fb6ec" stroke="#0f6cbd" stroke-width="2"/>
<rect x="1917.3" y="181.1" width="53.5" height="41.5" rx="0" fill="none" stroke="#333333" stroke-width="2"/>
<path d="M1969.0,195.0 C1972.0,192.0 1975.0,194.5 1974.0,198.0 L1955.5,221.5 L1950.5,216.5 Z" stroke="#ffffff" stroke-width="5" fill="#ffffff" /><path d="M1969.0,195.0 C1972.0,192.0 1975.0,194.5 1974.0,198.0 L1955.5,221.5 L1950.5,216.5 Z" stroke="#333" stroke-width="2" fill="#ffffff" /><path d="M1950.0,217.0 C1958.0,220.0 1958.0,230.0 1948.0,232.0 C1942.0,233.0 1937.0,231.0 1931.0,229.0 C1937.0,228.0 1940.0,225.0 1950.0,217.0 Z" stroke="#ffffff" stroke-width="4" fill="#7fb6ec" /><path d="M1950.0,217.0 C1958.0,220.0 1958.0,230.0 1948.0,232.0 C1942.0,233.0 1937.0,231.0 1931.0,229.0 C1937.0,228.0 1940.0,225.0 1950.0,217.0 Z" stroke="#0f6cbd" stroke-width="2" fill="#7fb6ec" />
<polyline points="1742.0,279.5 1746.8,285.5 1751.5,279.5" stroke="#242424" stroke-width="2" fill="none"/>
<polyline points="1856.0,279.5 1861.0,285.5 1866.0,279.5" stroke="#242424" stroke-width="2" fill="none"/>
<polyline points="1965.5,279.5 1970.5,285.5 1975.5,279.5" stroke="#242424" stroke-width="2" fill="none"/>
<rect x="2000.3" y="166.0" width="2.0" height="178.0" rx="0" fill="#c9c9c9" stroke="none" stroke-width="0"/>
<rect x="2033.3" y="181.6" width="53.0" height="40.5" rx="0" fill="#fafafa" stroke="#333333" stroke-width="2"/>
<line x1="2050.8" y1="181.0" x2="2050.8" y2="223.0" stroke="#6b6b6b" stroke-width="2"/><line x1="2069.2" y1="181.0" x2="2069.2" y2="223.0" stroke="#6b6b6b" stroke-width="2"/>
<path d="M2046,195.5 H2090.7 V208.1 H2046 L2040,201.8 Z" stroke="#0f6cbd" stroke-width="2" fill="#7fb6ec" />
<line x1="2054.8" y1="195.5" x2="2054.8" y2="208.1" stroke="#0f6cbd" stroke-width="2"/><line x1="2073.0" y1="195.5" x2="2073.0" y2="208.1" stroke="#0f6cbd" stroke-width="2"/>
<path d="M2053.5,201.3 H2031 M2041.7,189 L2029.5,201.3 L2041.7,213.5" stroke="#ffffff" stroke-width="5" fill="none" />
<path d="M2053.5,201.3 H2031 M2041.7,189 L2029.5,201.3 L2041.7,213.5" stroke="#2e8bcc" stroke-width="2" fill="none" />
<path d="M2121.4,194.5 V181.6 H2174.4 V223 H2121.4 V209.1" stroke="#333333" stroke-width="2" fill="#fafafa" />
<line x1="2138.6" y1="181.0" x2="2138.6" y2="223.0" stroke="#6b6b6b" stroke-width="2"/><line x1="2156.8" y1="181.0" x2="2156.8" y2="223.0" stroke="#6b6b6b" stroke-width="2"/>
<path d="M2128.5,195.5 H2154 L2161,201.8 L2154,208.1 H2128.5 Z" stroke="#0f6cbd" stroke-width="2" fill="#7fb6ec" />
<line x1="2146.5" y1="195.5" x2="2146.5" y2="208.1" stroke="#0f6cbd" stroke-width="2"/>
<path d="M2155.5,192 L2178.2,214.3 M2178.2,192 L2155.5,214.3" stroke="#ffffff" stroke-width="5" fill="none" />
<path d="M2155.5,192 L2178.2,214.3 M2178.2,192 L2155.5,214.3" stroke="#e04444" stroke-width="2" fill="none" />
<rect x="2209.2" y="181.6" width="53.5" height="40.5" rx="0" fill="#fafafa" stroke="none" stroke-width="0"/>
<line x1="2209.0" y1="194.8" x2="2263.0" y2="194.8" stroke="#6b6b6b" stroke-width="2"/><line x1="2209.0" y1="209.1" x2="2263.0" y2="209.1" stroke="#6b6b6b" stroke-width="2"/>
<line x1="2222.9" y1="181.0" x2="2222.9" y2="223.0" stroke="#6b6b6b" stroke-width="2"/><line x1="2249.1" y1="181.0" x2="2249.1" y2="223.0" stroke="#6b6b6b" stroke-width="2"/>
<rect x="2223.0" y="195.0" width="26.0" height="14.0" rx="0" fill="#7fb6ec" stroke="#0f6cbd" stroke-width="2"/>
<rect x="2209.2" y="181.6" width="53.5" height="40.5" rx="0" fill="none" stroke="#333333" stroke-width="2"/>
<path d="M2221,173.3 H2251 M2221.5,170 V176.5 M2250.5,170 V176.5" stroke="#2e8bcc" stroke-width="2" fill="none" />
<polyline points="2054.0,281.0 2059.2,287.0 2064.5,281.0" stroke="#242424" stroke-width="2" fill="none"/>
<polyline points="2142.0,281.0 2147.2,287.0 2152.5,281.0" stroke="#242424" stroke-width="2" fill="none"/>
<polyline points="2230.0,279.5 2235.2,285.5 2240.5,279.5" stroke="#242424" stroke-width="2" fill="none"/>
<rect x="2292.0" y="166.0" width="2.0" height="178.0" rx="0" fill="#c9c9c9" stroke="none" stroke-width="0"/>
<path d="M2346,178 V175 H2323.5 L2336,187.7 L2323.5,200.3 H2346 V197.3" stroke="#3b3b3b" stroke-width="2" fill="none" />
<polyline points="2367.0,185.5 2372.0,191.5 2377.0,185.5" stroke="#242424" stroke-width="2" fill="none"/>
<rect x="2319.5" y="227.5" width="30.0" height="25.4" rx="0" fill="#fafafa" stroke="#333333" stroke-width="2"/>
<line x1="2319.5" y1="231.5" x2="2349.5" y2="231.5" stroke="#333333" stroke-width="1.6"/>
<path d="M2333.6,235 V248 M2327.5,242 L2333.6,248 L2339.7,242" stroke="#1e8bcd" stroke-width="2" fill="none" />
<polyline points="2363.0,237.5 2368.0,243.5 2373.0,237.5" stroke="#242424" stroke-width="2" fill="none"/>
<path d="M2319,294.8 L2338,277.3 L2348.6,288.3 L2329,306 Z" stroke="#9b35ad" stroke-width="2" fill="#ffffff" />
<path d="M2319,294.8 L2325,289.3 L2335.3,300.5 L2329,306 Z" stroke="#9b35ad" stroke-width="2" fill="#d9a3e2" />
<polyline points="2363.0,289.5 2368.0,295.5 2373.0,289.5" stroke="#242424" stroke-width="2" fill="none"/>
<path d="M2421.5,199.5 L2431,176.5 L2440.5,199.5 M2424.5,192 H2437.5" stroke="#1e8bcd" stroke-width="2.2" fill="none" />
<path d="M2422,205.5 H2438.5 L2422,226.5 H2439.5" stroke="#3b3b3b" stroke-width="2.2" fill="none" />
<path d="M2446,189.5 H2476 V194 L2464,205.5 V219 H2458 V205.5 L2446,194 Z" stroke="#333333" stroke-width="2" fill="#fafafa" />
<polyline points="2486.5,280.0 2491.5,285.5 2496.5,280.0" stroke="#242424" stroke-width="2" fill="none"/>
<circle cx="2562.7" cy="194.5" r="20.3" fill="#f7f7f7" stroke="#333" stroke-width="2"/>
<line x1="2548.0" y1="210.6" x2="2526.5" y2="231.0" stroke="#333333" stroke-width="2"/>
<polyline points="2577.0,280.0 2582.2,285.5 2587.5,280.0" stroke="#242424" stroke-width="2" fill="none"/>
<rect x="2617.8" y="166.0" width="2.0" height="178.0" rx="0" fill="#c9c9c9" stroke="none" stroke-width="0"/>
<rect x="2655.2" y="175.5" width="53.6" height="53.0" rx="0" fill="none" stroke="#c43e1c" stroke-width="2.5"/>
<rect x="2661.0" y="181.0" width="18.5" height="18.0" rx="0" fill="none" stroke="#c43e1c" stroke-width="2.2"/>
<rect x="2661.0" y="205.0" width="18.5" height="18.0" rx="0" fill="none" stroke="#c43e1c" stroke-width="2.2"/>
<rect x="2685.0" y="181.0" width="18.5" height="18.0" rx="0" fill="none" stroke="#c43e1c" stroke-width="2.2"/>
<rect x="2685.0" y="205.0" width="18.5" height="18.0" rx="0" fill="none" stroke="#c43e1c" stroke-width="2.2"/>
<rect x="2742.0" y="166.0" width="2.0" height="178.0" rx="0" fill="#c9c9c9" stroke="none" stroke-width="0"/>
<polyline points="2818.5,323.5 2828.0,333.5 2837.5,323.5" stroke="#242424" stroke-width="2.2" fill="none"/>
<polyline points="181.5,389.5 190.5,398.5 199.5,389.5" stroke="#242424" stroke-width="2.2" fill="none"/>
<rect x="229.0" y="383.3" width="4.4" height="4.4" rx="0" fill="#242424" stroke="none" stroke-width="0"/>
<rect x="229.0" y="390.8" width="4.4" height="4.4" rx="0" fill="#242424" stroke="none" stroke-width="0"/>
<rect x="229.0" y="398.3" width="4.4" height="4.4" rx="0" fill="#242424" stroke="none" stroke-width="0"/>
<path d="M264.5,381.5 L288,404.5 M288,381.5 L264.5,404.5" stroke="#a0a0a0" stroke-width="2" fill="none" />
<path d="M308.5,391.5 L319,402 L339.5,381.5" stroke="#a0a0a0" stroke-width="2" fill="none" />
<text x="357" y="402.5" font-family="Liberation Serif" font-style="italic" font-weight="bold" font-size="32" fill="#2a2a2a">f</text>
<text x="370.5" y="403" font-family="Liberation Serif" font-style="italic" font-weight="bold" font-size="25" fill="#2a2a2a">x</text>
<polyline points="2829.5,387.0 2838.5,396.5 2847.5,387.0" stroke="#242424" stroke-width="2.2" fill="none"/>
<path d="M2846,451.5 L2854.5,439 L2863,451.5 Z" stroke="none" stroke-width="0" fill="#6e6e6e" />
<path d="M2893,50 L2888.5,55 L2893,60" stroke="#5f6368" stroke-width="3.5" fill="none" />
<circle cx="2895" cy="90" r="5.5" stroke="#fbbc05" stroke-width="2.6"/>
<path d="M2891,86 A5.5,5.5 0 0 1 2895,84.5" stroke="#ea4335" stroke-width="2.6" fill="none" />
<path d="M2890.5,93 A5.5,5.5 0 0 0 2895,95.5" stroke="#34a853" stroke-width="2.6" fill="none" />
<circle cx="2890.5" cy="126.3" r="1.8" fill="#333"/>
<circle cx="2890.5" cy="132.5" r="1.8" fill="#333"/>
<circle cx="2890.5" cy="138.6" r="1.8" fill="#333"/>
</svg>
</body></html>
